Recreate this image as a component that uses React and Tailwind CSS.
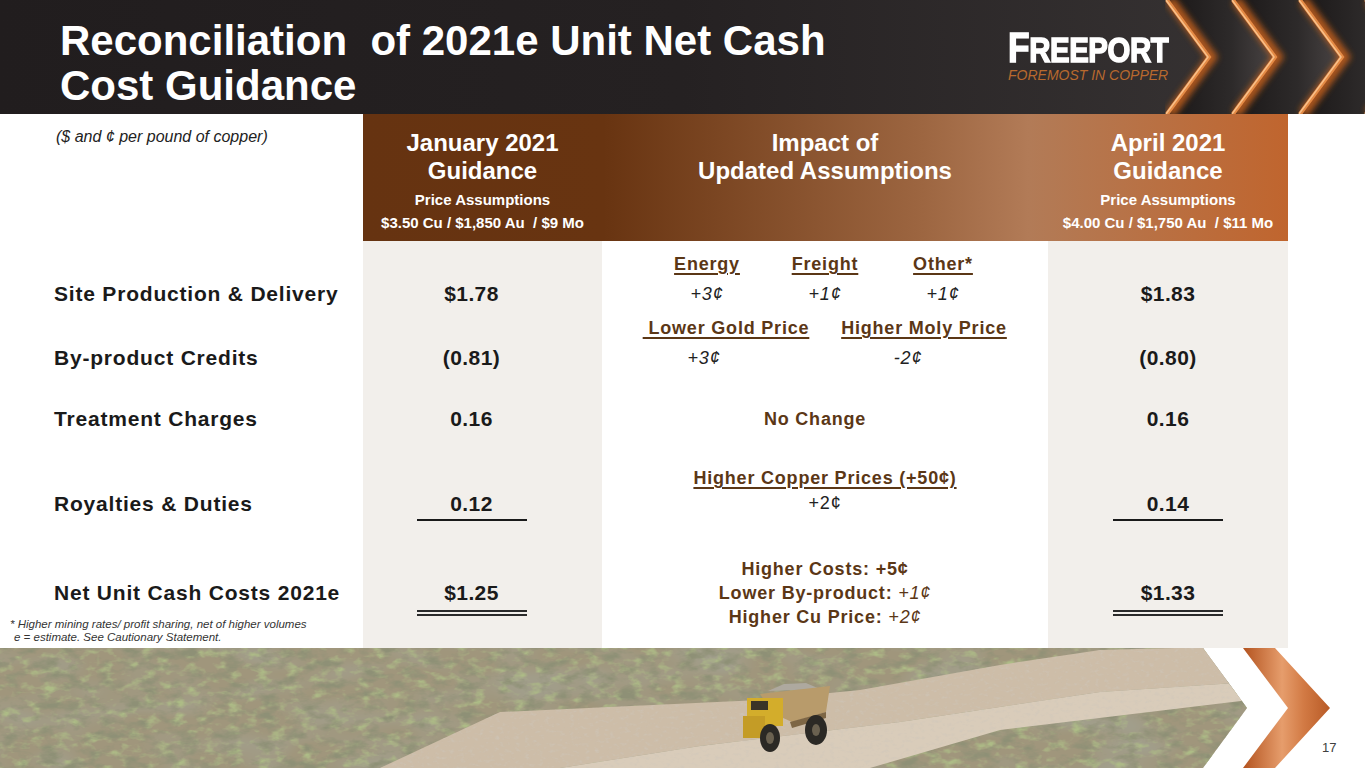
import React from 'react';

const brown = 'text-[#5b3716]';

const HeaderChevrons = () => (
  <svg width="200" height="114" viewBox="0 0 200 114" className="absolute right-0 top-0">
    <defs>
      <linearGradient id="band" x1="0" y1="0" x2="1" y2="0">
        <stop offset="0" stopColor="#1a1717" />
        <stop offset="0.6" stopColor="#2d2a2a" />
        <stop offset="1" stopColor="#4a4545" />
      </linearGradient>
      <filter id="glow" x="-50%" y="-10%" width="200%" height="120%">
        <feGaussianBlur stdDeviation="3" />
      </filter>
    </defs>
    {[2, 68, 135, 201].map((x) => (
      <g key={x}>
        <polygon
          points={`${x},0 ${x + 66},0 ${x + 108},57 ${x + 66},114 ${x},114 ${x + 42},57`}
          fill="url(#band)"
        />
        <polyline
          points={`${x + 3},0 ${x + 45},57 ${x + 3},114`}
          fill="none"
          stroke="#c8621f"
          strokeWidth="10"
          opacity="0.85"
          filter="url(#glow)"
        />
        <polyline
          points={`${x},0 ${x + 42},57 ${x},114`}
          fill="none"
          stroke="#e48a45"
          strokeWidth="4"
        />
        <polyline
          points={`${x - 1},0 ${x + 41},57 ${x - 1},114`}
          fill="none"
          stroke="#f8c08a"
          strokeWidth="1.5"
        />
      </g>
    ))}
  </svg>
);

const Photo = () => (
  <svg width="1365" height="120" viewBox="0 648 1365 120" className="block">
    <defs>
      <clipPath id="photo">
        <polygon points="0,648 1203,648 1247,708 1203,768 0,768" />
      </clipPath>
      <clipPath id="light">
        <polygon points="380,768 500,712 760,700 860,690 1000,665 1100,650 1250,646 1250,700 1000,730 870,768" />
      </clipPath>
      <filter id="patch" x="0" y="0" width="1" height="1">
        <feTurbulence type="fractalNoise" baseFrequency="0.012 0.03" numOctaves="2" seed="9" />
        <feColorMatrix type="matrix" values="0 0 0 0 0.36  0 0 0 0 0.35  0 0 0 0 0.27  2.5 0 0 0 -1.05" />
      </filter>
      <filter id="shrubDark" x="0" y="0" width="1" height="1">
        <feTurbulence type="fractalNoise" baseFrequency="0.05 0.1" numOctaves="4" seed="4" />
        <feColorMatrix type="matrix" values="0 0 0 0 0.27  0 0 0 0 0.28  0 0 0 0 0.18  3 0 0 0 -1.4" />
      </filter>
      <filter id="shrubGreen" x="0" y="0" width="1" height="1">
        <feTurbulence type="fractalNoise" baseFrequency="0.07 0.12" numOctaves="3" seed="11" />
        <feColorMatrix type="matrix" values="0 0 0 0 0.42  0 0 0 0 0.5  0 0 0 0 0.24  0 3 0 0 -1.5" />
      </filter>
      <filter id="speck" x="0" y="0" width="1" height="1">
        <feTurbulence type="fractalNoise" baseFrequency="0.2 0.3" numOctaves="2" seed="2" />
        <feColorMatrix type="matrix" values="0 0 0 0 0.62  0 0 0 0 0.57  0 0 0 0 0.5  0 0 2.5 0 -1.3" />
      </filter>
      <linearGradient id="copper" x1="0" y1="0" x2="1" y2="0">
        <stop offset="0" stopColor="#b3531f" />
        <stop offset="0.45" stopColor="#e69d6c" />
        <stop offset="0.7" stopColor="#d27a44" />
        <stop offset="1" stopColor="#b85a26" />
      </linearGradient>
    </defs>
    <g clipPath="url(#photo)">
      <rect x="0" y="648" width="1365" height="120" fill="#a0967c" />
      <rect x="0" y="648" width="1365" height="120" filter="url(#patch)" />
      <rect x="0" y="648" width="1365" height="120" filter="url(#shrubGreen)" />
      <rect x="0" y="648" width="1365" height="120" filter="url(#shrubDark)" />
      <polygon points="380,768 500,712 760,700 860,690 1000,665 1100,650 1250,646 1250,682 1100,692 900,722 700,746 560,768" fill="#cdbda8" />
      <polygon points="560,768 700,746 900,722 1100,692 1250,682 1250,700 1000,730 870,768" fill="#d9ccba" />
      <g clipPath="url(#light)">
        <rect x="0" y="648" width="1365" height="120" filter="url(#speck)" opacity="0.6" />
      </g>
      <polygon points="768,691 784,684 806,683 820,689" fill="#aea99f" />
      <polygon points="760,694 830,686 826,712 792,722 772,713" fill="#b89b6b" />
      <polygon points="790,722 826,712 826,718 792,728" fill="#7d6645" />
      <rect x="747" y="698" width="36" height="28" fill="#d3ad2b" />
      <rect x="751" y="701" width="17" height="9" fill="#3a3427" />
      <rect x="743" y="716" width="22" height="22" fill="#c49c26" />
      <ellipse cx="770" cy="738" rx="10" ry="14" fill="#2b2925" />
      <ellipse cx="816" cy="730" rx="11" ry="15" fill="#2b2925" />
      <ellipse cx="770" cy="738" rx="4" ry="6" fill="#6a6150" />
      <ellipse cx="816" cy="730" rx="4" ry="6" fill="#6a6150" />
    </g>
    <polygon points="1243,648 1275,648 1330,708 1275,768 1243,768 1288,708" fill="url(#copper)" />
  </svg>
);

const HeadCol = ({ title, sub, prices }) => (
  <div className="pt-[15px] text-center text-white">
    <div className="text-[24px] leading-[28px] font-bold">{title}</div>
    <div className="text-[24px] leading-[28px] font-bold">{sub}</div>
    {prices && (
      <div className="mt-[3px] text-[15px] leading-[23px] font-bold">
        <div>Price Assumptions</div>
        <div className="whitespace-pre">{prices}</div>
      </div>
    )}
  </div>
);

const Label = ({ pt, lh, children }) => (
  <div className={`${pt} ${lh} pl-[54px] text-[21px] font-bold tracking-[0.8px] text-[#1a1a1a] whitespace-nowrap`}>{children}</div>
);

const Val = ({ pt, lh, line, left, children }) => (
  <div className={`${pt} ${lh} ${left ? 'pr-[22px]' : ''} bg-[#f2efeb] text-center text-[21px] font-bold tracking-[0.4px] text-[#1a1a1a]`}>
    {line === 'single' && <span className="inline-block w-[110px] border-b-2 border-[#1a1a1a] pb-[3px]">{children}</span>}
    {line === 'double' && <span className="inline-block w-[110px] border-b-[6px] border-double border-[#2a2a2a] pb-[5px]">{children}</span>}
    {!line && children}
  </div>
);

const U = ({ children }) => (
  <span className={`font-bold ${brown} underline underline-offset-[3px] decoration-[1.5px] whitespace-pre`}>{children}</span>
);

export default function App() {
  return (
    <div className="relative w-[1365px] h-[768px] overflow-hidden bg-white flex flex-col font-['Liberation_Sans',Arial,sans-serif]">
      <header className="relative h-[114px] shrink-0 flex bg-linear-to-r from-[#211d1e] via-[#252122] to-[#3a3636]">
        <HeaderChevrons />
        <h1 className="relative flex-1 pl-[60px] pt-[18px] text-[42px] leading-[45px] font-bold text-white whitespace-nowrap">
          Reconciliation{'\u00a0'} of 2021e Unit Net Cash
          <br />
          Cost Guidance
        </h1>
        <div className="relative w-[357px] pt-[27px]">
          <div className="leading-none text-white font-bold whitespace-nowrap origin-left scale-x-[0.84] tracking-[-0.5px] [-webkit-text-stroke:1.5px_#ffffff]">
            <span className="text-[42px]">F</span>
            <span className="text-[35px]">REEPORT</span>
          </div>
          <div className="-mt-[1px] text-[14px] leading-[14px] italic text-[#b8692e] whitespace-nowrap">FOREMOST IN COPPER</div>
        </div>
      </header>

      <div className="flex h-[127px] shrink-0">
        <div className="w-[363px] pl-[56px] pt-[14px] text-[16px] leading-[18px] italic text-[#222]">($ and ¢ per pound of copper)</div>
        <div className="w-[925px] grid grid-cols-[239px_446px_240px] bg-[linear-gradient(to_right,#663311_0%,#683411_26%,#9c6540_60%,#b27b57_72%,#c0652e_100%)]">
          <HeadCol title="January 2021" sub="Guidance" prices="$3.50 Cu / $1,850 Au  / $9 Mo" />
          <HeadCol title="Impact of" sub="Updated Assumptions" />
          <HeadCol title="April 2021" sub="Guidance" prices="$4.00 Cu / $1,750 Au  / $11 Mo" />
        </div>
      </div>

      <div className="w-[1288px] h-[407px] shrink-0 grid grid-cols-[363px_239px_446px_240px] grid-rows-[68px_64px_61px_100px_114px]">
        {/* Site production */}
        <Label pt="pt-[38px]" lh="leading-[30px]">Site Production &amp; Delivery</Label>
        <Val pt="pt-[38px]" lh="leading-[30px]" left>$1.78</Val>
        <div className="pt-[8px] grid grid-cols-[118px_118px_118px] justify-center text-center text-[18px] leading-[30px] tracking-[0.8px] text-[#222]">
          <U>Energy</U>
          <U>Freight</U>
          <U>Other*</U>
          <span className="italic">+3¢</span>
          <span className="italic">+1¢</span>
          <span className="italic">+1¢</span>
        </div>
        <Val pt="pt-[38px]" lh="leading-[30px]">$1.83</Val>

        {/* By-product */}
        <Label pt="pt-[34px]" lh="leading-[30px]">By-product Credits</Label>
        <Val pt="pt-[34px]" lh="leading-[30px]" left>(0.81)</Val>
        <div className="pt-[4px] grid grid-cols-[198px_198px] justify-center text-center text-[18px] leading-[30px] tracking-[0.8px] text-[#222]">
          <U>{' Lower Gold Price'}</U>
          <U>Higher Moly Price</U>
          <span className="italic pr-[44px]">+3¢</span>
          <span className="italic pr-[32px]">-2¢</span>
        </div>
        <Val pt="pt-[34px]" lh="leading-[30px]">(0.80)</Val>

        {/* Treatment */}
        <Label pt="pt-[31px]" lh="leading-[30px]">Treatment Charges</Label>
        <Val pt="pt-[31px]" lh="leading-[30px]" left>0.16</Val>
        <div className={`pt-[31px] pr-[20px] text-center text-[18px] leading-[30px] tracking-[0.8px] font-bold ${brown}`}>No Change</div>
        <Val pt="pt-[31px]" lh="leading-[30px]">0.16</Val>

        {/* Royalties */}
        <Label pt="pt-[57px]" lh="leading-[25px]">Royalties &amp; Duties</Label>
        <Val pt="pt-[57px]" lh="leading-[25px]" left line="single">0.12</Val>
        <div className="pt-[32px] flex flex-col items-center text-[18px] leading-[25px] tracking-[0.8px] text-[#222]">
          <U>Higher Copper Prices (+50¢)</U>
          <span>+2¢</span>
        </div>
        <Val pt="pt-[57px]" lh="leading-[25px]" line="single">0.14</Val>

        {/* Net unit */}
        <div>
          <Label pt="pt-[47px]" lh="leading-[24px]">Net Unit Cash Costs 2021e</Label>
          <div className="mt-[13px] pl-[10px] text-[11.5px] leading-[13px] italic text-[#333] whitespace-nowrap">
            <div>* Higher mining rates/ profit sharing, net of higher volumes</div>
            <div className="pl-[4px]">e = estimate. See Cautionary Statement.</div>
          </div>
        </div>
        <Val pt="pt-[47px]" lh="leading-[24px]" left line="double">$1.25</Val>
        <div className={`pt-[23px] text-center text-[18px] leading-[24px] tracking-[0.8px] font-bold ${brown}`}>
          <div>Higher Costs: +5¢</div>
          <div>
            Lower By-product: <span className="italic font-normal">+1¢</span>
          </div>
          <div>
            Higher Cu Price: <span className="italic font-normal">+2¢</span>
          </div>
        </div>
        <Val pt="pt-[47px]" lh="leading-[24px]" line="double">$1.33</Val>
      </div>

      <div className="h-[120px] shrink-0">
        <Photo />
      </div>
      <div className="absolute left-[1322px] top-[740px] text-[13px] leading-[16px] text-[#404040]">17</div>
    </div>
  );
}
